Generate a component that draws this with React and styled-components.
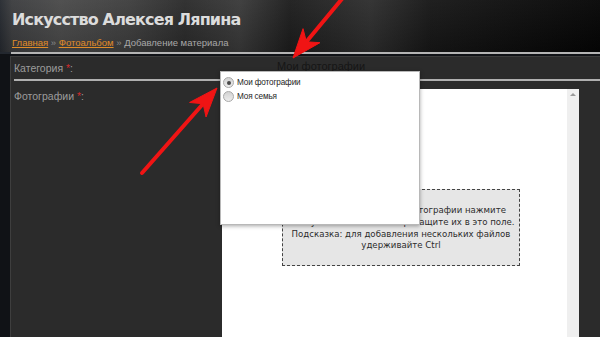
import React from "react";
import styled, { createGlobalStyle } from "styled-components";

const GlobalStyle = createGlobalStyle`
  html, body { margin: 0; padding: 0; background: #0c0e12; overflow: hidden; }
  #root { width: 600px; height: 337px; }
`;

const Page = styled.div`
  position: relative;
  width: 600px;
  height: 337px;
  overflow: hidden;
  display: flex;
  flex-direction: column;
  background: linear-gradient(180deg, #2b3038 0%, #171b21 40%, #0b0d11 100%);
  font-family: "DejaVu Sans", Verdana, sans-serif;
`;

const Header = styled.header`
  height: 52px;
  flex: none;
  box-sizing: border-box;
  padding: 9px 0 0 12px;
  background:
    linear-gradient(180deg, rgba(255,255,255,0.04) 0%, rgba(0,0,0,0.15) 100%),
    linear-gradient(90deg, #262a30 0px, #3c3d3f 12px, #4a4a4a 60px, #3e3e3e 130px,
      #2b2b2b 185px, #3a3a3a 240px, #1d1d1d 290px, #2e2e2e 370px, #171717 430px,
      #0d0d0d 520px, #050505 600px);
`;

const Title = styled.h1`
  margin: 0;
  font-family: "DejaVu Sans", Verdana, sans-serif;
  font-weight: bold;
  font-size: 16px;
  line-height: 22px;
  color: #dcdcdc;
  letter-spacing: -0.85px;
`;

const Crumbs = styled.nav`
  margin-top: 5px;
  font-family: "Liberation Sans", Arial, sans-serif;
  font-size: 9.5px;
  line-height: 14px;
  color: #a8a8a8;
`;

const CrumbLink = styled.a`
  color: #e08c28;
  text-decoration: underline;
`;

const Sep = styled.span`
  color: #888;
`;

const Rule = styled.div`
  flex: none;
  height: 2px;
  margin-left: 11px;
  background: #b4b4b4;
`;

const Body = styled.div`
  flex: 1;
  display: flex;
  padding-top: 2px;
  padding-left: 10px;
  background: #101216;
`;

const Panel = styled.section`
  flex: 1;
  margin-right: -20px;
  background: #2b2b2b;
  border-top: 1px solid #3c3c3c;
  border-left: 1px solid #3e3e3e;
  padding-left: 3px;
  display: flex;
  flex-direction: column;
`;

const Row = styled.div`
  display: flex;
  align-items: ${(p) => (p.$top ? "flex-start" : "center")};
  height: ${(p) => (p.$height ? `${p.$height}px` : "auto")};
  padding-top: ${(p) => (p.$padTop ? `${p.$padTop}px` : "0")};
  flex: ${(p) => (p.$grow ? 1 : "none")};
`;

const Label = styled.div`
  width: 208px;
  flex: none;
  font-family: "Liberation Sans", Arial, sans-serif;
  font-size: 10.5px;
  line-height: 14px;
  color: #9c9c9c;
`;

const Star = styled.span`
  color: #d42a2a;
`;

const SelectValue = styled.div`
  padding-left: 55px;
  padding-bottom: 4px;
  font-family: "Liberation Sans", Arial, sans-serif;
  font-size: 11px;
  line-height: 12px;
  color: #161616;
`;

const Divider = styled.div`
  height: 2px;
  background: #b0b0b0;
  flex: none;
`;

const FileField = styled.div`
  display: flex;
  align-self: stretch;
`;

const WhiteBox = styled.div`
  width: 345px;
  box-sizing: border-box;
  background: #ffffff;
  padding: 100px 0 0 60px;
`;

const DropZone = styled.div`
  width: 238px;
  height: 77px;
  box-sizing: border-box;
  background: #e6e6e6;
  border: 1px dashed #444;
  display: flex;
  align-items: center;
  justify-content: center;
  text-align: center;
  font-family: "DejaVu Sans", Verdana, sans-serif;
  font-size: 8.6px;
  line-height: 11.8px;
  color: #2c2c2c;
  padding-top: 2px;
  white-space: nowrap;
`;

const Scrollbar = styled.div`
  width: 12px;
  background: #efefef;
  display: flex;
  justify-content: center;
  padding-top: 4px;
  box-sizing: border-box;
`;

const ScrollArrow = styled.div`
  width: 0;
  height: 0;
  border-left: 3px solid transparent;
  border-right: 3px solid transparent;
  border-bottom: 3px solid #9a9a9a;
`;

const Popup = styled.div`
  position: absolute;
  left: 220px;
  top: 71px;
  width: 200px;
  height: 154px;
  box-sizing: border-box;
  background: #fff;
  border: 1px solid #b8b8b8;
  box-shadow: 0 1px 4px rgba(0, 0, 0, 0.35);
  padding-top: 3px;
`;

const Option = styled.div`
  display: flex;
  align-items: center;
  height: 14px;
  padding-left: 2px;
  gap: 3px;
  font-family: "Liberation Sans", Arial, sans-serif;
  font-size: 8.2px;
  letter-spacing: -0.15px;
  font-weight: 500;
  color: #1e1e1e;
`;

const Radio = styled.span`
  position: relative;
  width: 11px;
  height: 11px;
  border-radius: 50%;
  box-sizing: border-box;
  border: 1px solid #a9a9a9;
  background: linear-gradient(180deg, #d2d2d2 0%, #ededed 100%);
  flex: none;
  &::after {
    content: "";
    display: ${(p) => (p.$checked ? "block" : "none")};
    position: absolute;
    left: 3px;
    top: 3px;
    width: 4px;
    height: 4px;
    border-radius: 50%;
    background: #4a4a4a;
  }
`;

const Overlay = styled.svg`
  position: absolute;
  left: 0;
  top: 0;
  pointer-events: none;
`;

function Arrow({ x1, y1, x2, y2 }) {
  const dx = x2 - x1;
  const dy = y2 - y1;
  const len = Math.hypot(dx, dy);
  const ux = dx / len;
  const uy = dy / len;
  const nx = -uy;
  const ny = ux;
  const headLen = 29;
  const half = 11;
  const notch = 21;
  const bx = x2 - headLen * ux;
  const by = y2 - headLen * uy;
  const w1 = [bx + half * nx, by + half * ny];
  const w2 = [bx - half * nx, by - half * ny];
  const nt = [x2 - notch * ux, y2 - notch * uy];
  const pts = [[x2, y2], w1, nt, w2].map((p) => p.join(",")).join(" ");
  return (
    <g fill="#f01414" stroke="#f01414">
      <line x1={x1} y1={y1} x2={nt[0]} y2={nt[1]} strokeWidth="4" strokeLinecap="round" />
      <polygon points={pts} strokeWidth="1" strokeLinejoin="round" />
    </g>
  );
}

export default function App() {
  return (
    <>
      <GlobalStyle />
      <Page>
        <Header>
          <Title>Искусство Алексея Ляпина</Title>
          <Crumbs>
            <CrumbLink href="#">Главная</CrumbLink>
            <Sep> » </Sep>
            <CrumbLink href="#">Фотоальбом</CrumbLink>
            <Sep> » </Sep>
            Добавление материала
          </Crumbs>
        </Header>
        <Rule />
        <Body>
          <Panel>
            <Row $height={22}>
              <Label>
                Категория <Star>*</Star>:
              </Label>
              <SelectValue>Мои фотографии</SelectValue>
            </Row>
            <Divider />
            <Row $top $grow $padTop={8}>
              <Label>
                Фотографии <Star>*</Star>:
              </Label>
              <FileField>
                <WhiteBox>
                  <DropZone>
                    Чтобы загрузить новые фотографии нажмите
                    <br />
                    на эту область или же перетащите их в это поле.
                    <br />
                    Подсказка: для добавления нескольких файлов
                    <br />
                    удерживайте Ctrl
                  </DropZone>
                </WhiteBox>
                <Scrollbar>
                  <ScrollArrow />
                </Scrollbar>
              </FileField>
            </Row>
          </Panel>
        </Body>
        <Popup>
          <Option>
            <Radio $checked />
            Мои фотографии
          </Option>
          <Option>
            <Radio />
            Моя семья
          </Option>
        </Popup>
        <Overlay width="600" height="337" viewBox="0 0 600 337">
          <Arrow x1={142} y1={173} x2={217} y2={88} />
          <Arrow x1={346} y1={-6} x2={293} y2={58} />
        </Overlay>
      </Page>
    </>
  );
}
